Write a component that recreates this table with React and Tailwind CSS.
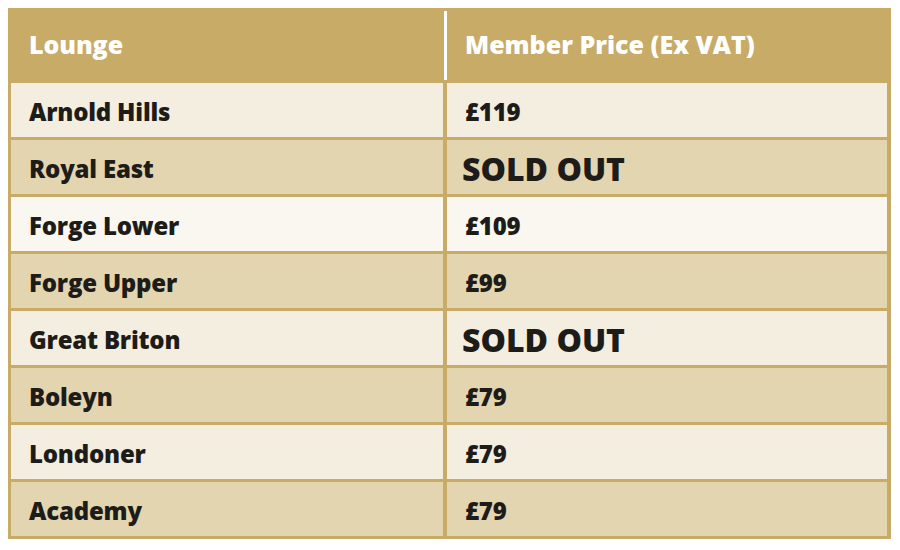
import React from "react";

const rows = [
  { name: "Arnold Hills", price: "£119", bg: "bg-[#f4eee0]" },
  { name: "Royal East", price: "SOLD OUT", bg: "bg-[#e3d5b0]" },
  { name: "Forge Lower", price: "£109", bg: "bg-[#faf7f0]" },
  { name: "Forge Upper", price: "£99", bg: "bg-[#e3d5b0]" },
  { name: "Great Briton", price: "SOLD OUT", bg: "bg-[#f4eee0]" },
  { name: "Boleyn", price: "£79", bg: "bg-[#e3d5b0]" },
  { name: "Londoner", price: "£79", bg: "bg-[#f4eee0]" },
  { name: "Academy", price: "£79", bg: "bg-[#e3d5b0]" },
];

export default function App() {
  return (
    <div className="w-[900px] h-[550px] bg-white pt-[8px] pl-[8px] font-['Open_Sans',sans-serif]">
      <div className="w-[883px] bg-[#c8ab66] pl-[3px] pr-[4px] pb-[3px]">
        <div className="h-[75px] flex items-center">
          <div className="w-[432px] pl-[18px] pb-[1px] text-white font-extrabold text-[25px] tracking-[-0.1px]">
            Lounge
          </div>
          <div className="w-[3px] ml-[1px] h-[69px] bg-white" />
          <div className="flex-1 pl-[18px] pb-[1px] text-white font-extrabold text-[25px]">
            Member Price (Ex VAT)
          </div>
        </div>
        {rows.map((r, i) => (
          <div
            key={r.name}
            className={`flex h-[54px] gap-[4px] ${i > 0 ? "mt-[3px]" : ""}`}
          >
            <div
              className={`w-[432px] flex items-center pl-[18px] pt-[3px] text-[24px] font-extrabold tracking-[-0.2px] text-[#1e1c18] ${r.bg}`}
            >
              {r.name}
            </div>
            <div
              className={`flex-1 flex items-center text-[#1e1c18] font-extrabold ${r.bg} ${
                r.price === "SOLD OUT"
                  ? "pl-[15px] pt-[3px] text-[32px]"
                  : "pl-[18px] pt-[3px] text-[24px] tracking-[-0.2px]"
              }`}
            >
              {r.price}
            </div>
          </div>
        ))}
      </div>
    </div>
  );
}
